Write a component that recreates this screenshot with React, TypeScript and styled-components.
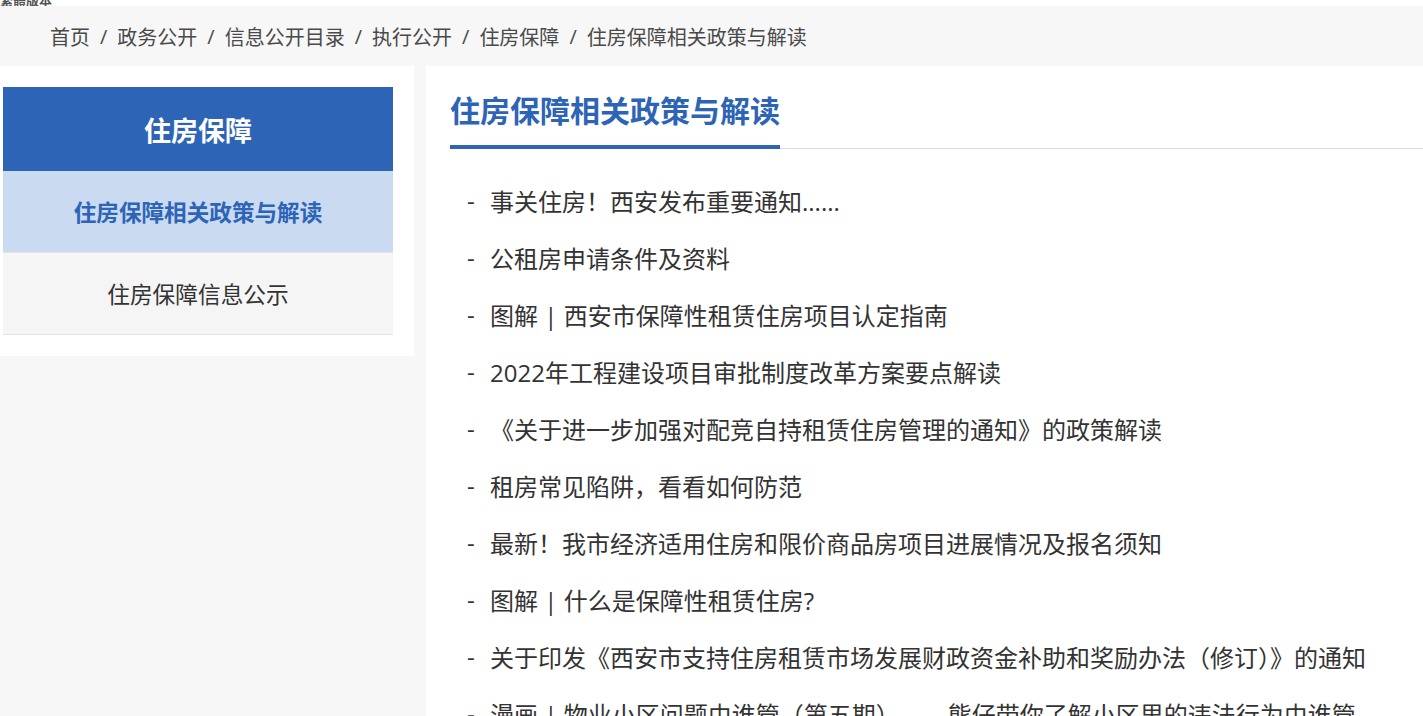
import React from "react";
import styled, { createGlobalStyle } from "styled-components";

const Global = createGlobalStyle`
  html, body { margin: 0; padding: 0; background: #f7f7f7; }
  body { font-family: "Open Sans", "Noto Sans CJK SC", sans-serif; color: #333; }
  * { box-sizing: border-box; }
`;

const TopStrip = styled.div`
  height: 6px;
  background: #fff;
  overflow: hidden;
`;

const TopText = styled.div`
  font-size: 13px;
  line-height: 13px;
  font-weight: 700;
  color: #555;
  margin-top: -7px;
  font-family: "Noto Sans CJK SC", sans-serif;
`;

const Breadcrumb = styled.nav`
  height: 60px;
  background: #f7f7f7;
  display: flex;
  align-items: center;
  padding-left: 50px;
  font-size: 20px;
  color: #4a4a4a;
  font-family: "Open Sans", "Noto Sans CJK SC", sans-serif;
`;

const Sep = styled.span`
  padding: 0 10px;
`;

const Body = styled.div`
  display: flex;
  align-items: flex-start;
  gap: 12px;
`;

const Sidebar = styled.aside`
  width: 414px;
  flex-shrink: 0;
  background: #fff;
  padding: 21px 21px 21px 3px;
`;

const SideHead = styled.div`
  height: 84px;
  background: #2d64b6;
  color: #fff;
  font-size: 27px;
  font-weight: 700;
  display: flex;
  align-items: center;
  justify-content: center;
  font-family: "Noto Sans CJK SC", sans-serif;
`;

const SideItem = styled.div<{ $active?: boolean }>`
  height: 82px;
  display: flex;
  align-items: center;
  justify-content: center;
  border-bottom: 1px solid #e4e4e4;
  background: ${(p) => (p.$active ? "#c9daf1" : "#f5f5f5")};
  color: ${(p) => (p.$active ? "#2d64b6" : "#333")};
  font-weight: ${(p) => (p.$active ? 700 : 400)};
  font-size: ${(p) => (p.$active ? "22.6px" : "22.7px")};
  font-family: "Noto Sans CJK SC", sans-serif;
`;

const Main = styled.main`
  flex: 1;
  min-height: 660px;
  background: #fff;
  padding: 20px 0 0 24px;
`;

const TitleBar = styled.div`
  border-bottom: 1px solid #dcdcdc;
  display: flex;
`;

const Title = styled.h1`
  margin: 0 0 -1px;
  font-size: 30px;
  line-height: 46px;
  font-weight: 700;
  color: #2d64b6;
  padding-bottom: 13px;
  border-bottom: 4px solid #2d64b6;
  font-family: "Noto Sans CJK SC", sans-serif;
`;

const List = styled.ul`
  list-style: none;
  margin: 0;
  padding: 23px 0 0 17px;
`;

const Item = styled.li`
  height: 57px;
  display: flex;
  align-items: center;
  font-size: 24px;
  color: #333;
  white-space: nowrap;
`;

const Dash = styled.span`
  width: 23px;
  flex-shrink: 0;
`;

const items = [
  "事关住房！西安发布重要通知......",
  "公租房申请条件及资料",
  "图解 | 西安市保障性租赁住房项目认定指南",
  "2022年工程建设项目审批制度改革方案要点解读",
  "《关于进一步加强对配竞自持租赁住房管理的通知》的政策解读",
  "租房常见陷阱，看看如何防范",
  "最新！我市经济适用住房和限价商品房项目进展情况及报名须知",
  "图解 | 什么是保障性租赁住房?",
  "关于印发《西安市支持住房租赁市场发展财政资金补助和奖励办法（修订）》的通知",
  "漫画 | 物业小区问题由谁管（第五期）——熊仔带你了解小区里的违法行为由谁管",
];

const crumbs = ["首页", "政务公开", "信息公开目录", "执行公开", "住房保障", "住房保障相关政策与解读"];

export default function App() {
  return (
    <>
      <Global />
      <TopStrip>
        <TopText>繁體版本</TopText>
      </TopStrip>
      <Breadcrumb>
        {crumbs.map((c, i) => (
          <React.Fragment key={c}>
            {i > 0 && <Sep>/</Sep>}
            <span>{c}</span>
          </React.Fragment>
        ))}
      </Breadcrumb>
      <Body>
        <Sidebar>
          <SideHead>住房保障</SideHead>
          <SideItem $active>住房保障相关政策与解读</SideItem>
          <SideItem>住房保障信息公示</SideItem>
        </Sidebar>
        <Main>
          <TitleBar>
            <Title>住房保障相关政策与解读</Title>
          </TitleBar>
          <List>
            {items.map((t) => (
              <Item key={t}>
                <Dash>-</Dash>
                <span>{t}</span>
              </Item>
            ))}
          </List>
        </Main>
      </Body>
    </>
  );
}
